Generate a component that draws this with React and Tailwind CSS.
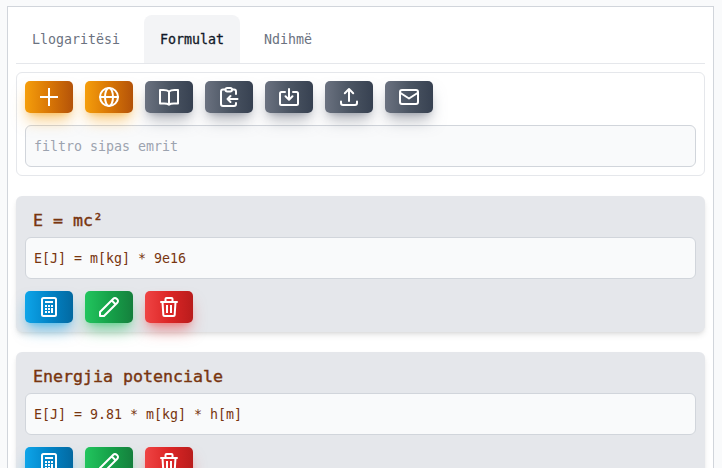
const tones = {
  amber: 'from-[#f59e0b] via-[#d97706] to-[#b45309] shadow-[#f59e0b]/50',
  gray: 'from-[#6b7280] via-[#4b5563] to-[#374151] shadow-[#6b7280]/50',
  sky: 'from-[#0ea5e9] via-[#0284c7] to-[#0369a1] shadow-[#0ea5e9]/50',
  green: 'from-[#22c55e] via-[#16a34a] to-[#15803d] shadow-[#22c55e]/50',
  red: 'from-[#ef4444] via-[#dc2626] to-[#b91c1c] shadow-[#ef4444]/50',
};

const icons = {
  plus: <path strokeLinecap="butt" d="M3 12h18M12 3v18" />,
  globe: (
    <>
      <circle cx="12" cy="12" r="9" />
      <ellipse cx="12" cy="12" rx="4" ry="9" />
      <path d="M3 12h18" />
    </>
  ),
  book: (
    <path d="M12 6.500v13.300M12 6.500C10.500 5.300 8.500 5 6.500 5H3v13.500h4c2 0 3.800.2 5 1.200 1.200-1 3-1.200 5-1.200h4V5h-3.500C15.500 5 13.500 5.300 12 6.500z" />
  ),
  paste: (
    <>
      <path d="M8 4.500H6a2 2 0 0 0-2 2V19a2 2 0 0 0 2 2h11a2 2 0 0 0 2-2v-1M15 4.500h2a2 2 0 0 1 2 2V9" />
      <rect x="8.500" y="3" width="6.500" height="3.500" rx="1.700" />
      <path d="M20.500 14H10.500M13.500 11l-3 3 3 3" />
    </>
  ),
  save: (
    <>
      <path d="M8 7H4.500A1.500 1.500 0 0 0 3 8.500v10A1.500 1.500 0 0 0 4.500 20h15a1.500 1.500 0 0 0 1.500-1.500v-10A1.500 1.500 0 0 0 19.500 7H16" />
      <path d="M12 4v10.500M8.500 11.300l3.500 3.500 3.500-3.500" />
    </>
  ),
  upload: (
    <>
      <path d="M4 16.500V18a2 2 0 0 0 2 2h12a2 2 0 0 0 2-2v-1.500" />
      <path d="M12 16V4M7.800 8.200 12 4l4.200 4.200" />
    </>
  ),
  mail: (
    <>
      <rect x="3" y="5" width="18" height="14" rx="2" />
      <path d="m3.500 8 8.500 5.500L20.500 8" />
    </>
  ),
  calculator: (
    <>
      <rect x="5" y="3" width="14" height="18" rx="1.500" />
      <path strokeLinecap="butt" d="M8 7h8" />
      <g fill="currentColor" stroke="none">
        <path d="M8 10h2v2H8zM11 10h2v2h-2zM14 10h2v2h-2zM8 13h2v2H8zM11 13h2v2h-2zM14 13h2v5h-2zM8 16h2v2H8zM11 16h2v2h-2z" />
      </g>
    </>
  ),
  pencil: <path d="M3 21v-4L16.300 3.700a2.300 2.300 0 0 1 3.300 0l.7.7a2.300 2.300 0 0 1 0 3.300L7 21zM14.800 5.500l3.700 3.700" />,
  trash: (
    <>
      <path d="M4 7h16M8.500 6.500V4A1 1 0 0 1 9.500 3h5a1 1 0 0 1 1 1v2.500" />
      <path d="M5.500 7l.8 12.500A1.500 1.500 0 0 0 7.800 21h8.400a1.500 1.500 0 0 0 1.500-1.500L18.500 7" />
      <path strokeLinecap="butt" d="M10 10v8M14 10v8" />
    </>
  ),
};

function IconButton({ tone, icon }) {
  return (
    <button className={`flex h-8 w-12 items-center justify-center rounded-[5px] bg-linear-to-r/srgb text-white shadow-lg ${tones[tone]}`}>
      <svg className="size-6" viewBox="0 0 24 24" fill="none" stroke="currentColor" strokeWidth="2" strokeLinecap="round" strokeLinejoin="round">
        {icons[icon]}
      </svg>
    </button>
  );
}

const field = 'h-[42px] w-full rounded-md border border-[#d1d5db] bg-[#f9fafb] px-2 text-[13.29px]';

function Card({ title, formula }) {
  return (
    <section className="mb-5 h-[136px] rounded-md bg-[#e5e7eb] px-[9px] pt-2 shadow-md">
      <h2 className="h-[33px] pl-2 text-[16.61px] leading-[34px] [-webkit-text-stroke:0.4px]">{title}</h2>
      <div className={`${field} flex items-center pt-0.5`}>{formula}</div>
      <div className="mt-3 flex gap-3">
        <IconButton tone="sky" icon="calculator" />
        <IconButton tone="green" icon="pencil" />
        <IconButton tone="red" icon="trash" />
      </div>
    </section>
  );
}

export default function App() {
  return (
    <div className="h-[468px] overflow-hidden bg-[#f9fafb] pt-1.5 pr-2 pl-[7px] font-['DejaVu_Sans_Mono',monospace] text-[#78350f]">
      <main className="h-[600px] border border-[#d1d5db] bg-white p-2">
        <nav className="flex h-[49px] gap-2 border-b border-[#e5e7eb] text-[13.29px] leading-[50px] text-[#6b7280]">
          <a className="w-[120px] px-4">Llogaritësi</a>
          <a className="h-12 w-24 rounded-t-lg bg-[#f3f4f6] px-4 text-[#111827] [-webkit-text-stroke:0.3px]">Formulat</a>
          <a className="px-4">Ndihmë</a>
        </nav>
        <section className="mt-2 mb-5 h-[104px] rounded-md border border-[#e5e7eb] p-2">
          <div className="mb-3 flex gap-3">
            <IconButton tone="amber" icon="plus" />
            <IconButton tone="amber" icon="globe" />
            <IconButton tone="gray" icon="book" />
            <IconButton tone="gray" icon="paste" />
            <IconButton tone="gray" icon="save" />
            <IconButton tone="gray" icon="upload" />
            <IconButton tone="gray" icon="mail" />
          </div>
          <input className={`${field} block placeholder:text-[#9ca3af]`} placeholder="filtro sipas emrit" />
        </section>
        <Card title="E = mc²" formula="E[J] = m[kg] * 9e16" />
        <Card title="Energjia potenciale" formula="E[J] = 9.81 * m[kg] * h[m]" />
      </main>
    </div>
  );
}
